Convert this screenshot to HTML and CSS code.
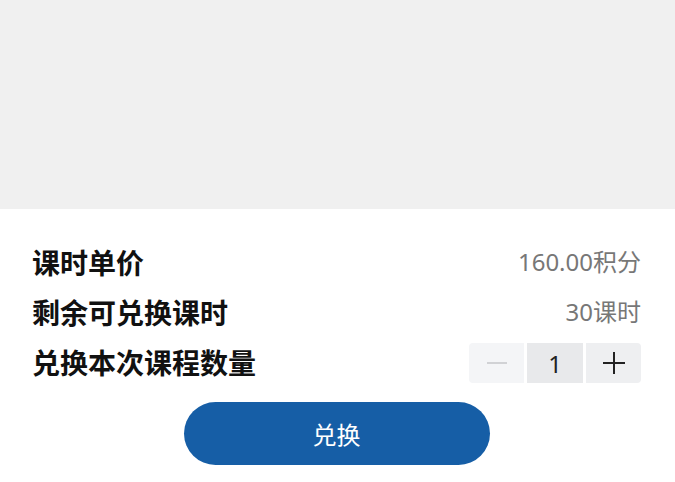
FILE: index.html
```html
<!DOCTYPE html>
<html lang="zh-CN">
<head>
    <meta charset="UTF-8">
    <meta name="viewport" content="width=device-width, initial-scale=1.0">
    <title>兑换课时</title>
    <link rel="stylesheet" href="styles.css">
</head>
<body>
    <div class="mask"></div>

    <div class="sheet">
        <div class="row">
            <span class="label">课时单价</span>
            <span class="value">160.00积分</span>
        </div>
        <div class="row">
            <span class="label">剩余可兑换课时</span>
            <span class="value">30课时</span>
        </div>
        <div class="row">
            <span class="label">兑换本次课程数量</span>
            <div class="stepper">
                <button class="step minus" disabled>
                    <svg width="22" height="22" viewBox="0 0 22 22"><line x1="1" y1="11" x2="21" y2="11" stroke="#c9cacc" stroke-width="1.6"/></svg>
                </button>
                <span class="count">1</span>
                <button class="step plus">
                    <svg width="22" height="22" viewBox="0 0 22 22"><line x1="0" y1="11" x2="22" y2="11" stroke="#222" stroke-width="2"/><line x1="11" y1="0" x2="11" y2="22" stroke="#222" stroke-width="2"/></svg>
                </button>
            </div>
        </div>

        <button class="submit">兑换</button>
    </div>
</body>
</html>
```

FILE: styles.css
```css
body {
    margin: 0;
    padding: 0;
    background: #ffffff;
    font-family: "Noto Sans CJK SC", "Noto Sans", sans-serif;
    color: #111;
}

.mask {
    height: 209px;
    background: #f0f0f0;
}

.sheet {
    padding: 28px 34px 0 32px;
}

.row {
    display: flex;
    justify-content: space-between;
    align-items: center;
    height: 50px;
}

.label {
    font-size: 28px;
    font-weight: bold;
    color: #111;
}

.value {
    font-family: "Noto Sans", "Noto Sans CJK SC", sans-serif;
    font-size: 24px;
    color: #777;
    margin-top: -4px;
}

.stepper {
    display: flex;
    gap: 3px;
    height: 40px;
    margin-top: 2px;
}

.step {
    width: 55px;
    height: 40px;
    border: none;
    padding: 0;
    display: flex;
    align-items: center;
    justify-content: center;
    cursor: pointer;
}

.step.minus {
    background: #f4f5f7;
    border-radius: 4px 0 0 4px;
    cursor: not-allowed;
}

.step.plus {
    background: #eeeff1;
    border-radius: 0 4px 4px 0;
}

.count {
    width: 56px;
    display: flex;
    align-items: center;
    justify-content: center;
    background: #e8e9eb;
    font-family: "Noto Sans", sans-serif;
    font-size: 24px;
    color: #222;
}

.submit {
    display: block;
    width: 306px;
    height: 63px;
    margin: 15px auto 0;
    border: none;
    border-radius: 32px;
    background: #165ea6;
    color: #fff;
    font-family: "Noto Sans CJK SC", sans-serif;
    font-size: 24px;
    cursor: pointer;
}
```
